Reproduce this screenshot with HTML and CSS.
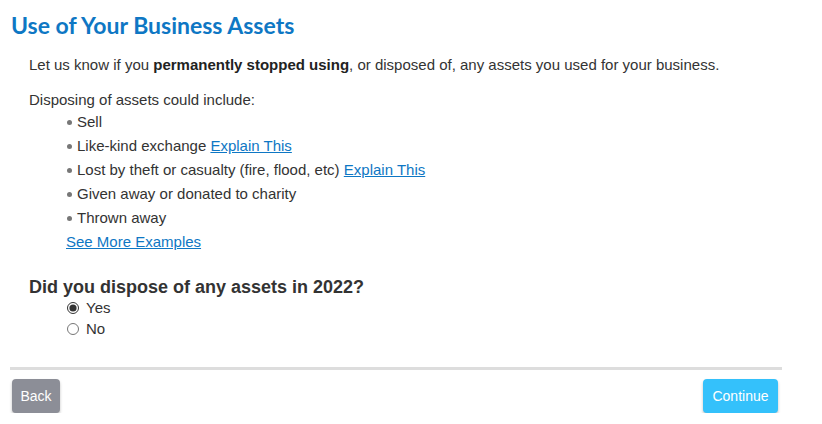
FILE: index.html
```html
<!DOCTYPE html>
<html lang="en">
<head>
    <meta charset="UTF-8">
    <meta name="viewport" content="width=device-width, initial-scale=1.0">
    <title>Use of Your Business Assets</title>
    <link rel="stylesheet" href="styles.css">
</head>
<body>
    <div class="page">
        <h1 class="title">Use of Your Business Assets</h1>

        <div class="content">
            <p class="intro">Let us know if you <strong>permanently stopped using</strong>, or disposed of, any assets you used for your business.</p>

            <p class="lead">Disposing of assets could include:</p>
            <ul class="examples">
                <li>Sell</li>
                <li>Like-kind exchange <a href="#">Explain This</a></li>
                <li>Lost by theft or casualty (fire, flood, etc) <a href="#">Explain This</a></li>
                <li>Given away or donated to charity</li>
                <li>Thrown away</li>
            </ul>
            <a href="#" class="more">See More Examples</a>

            <h2 class="question">Did you dispose of any assets in 2022?</h2>
            <div class="options">
                <label class="option"><input type="radio" name="dispose" checked> Yes</label>
                <label class="option"><input type="radio" name="dispose"> No</label>
            </div>
        </div>

        <div class="footer">
            <button class="btn back">Back</button>
            <button class="btn continue">Continue</button>
        </div>
    </div>
</body>
</html>
```

FILE: styles.css
```css
/* General Reset */
* {
    box-sizing: border-box;
    margin: 0;
    padding: 0;
}

body {
    background-color: #fff;
    font-family: Arial, "Liberation Sans", sans-serif;
    font-size: 15px;
    color: #333;
}

.page {
    width: 772px;
    margin-left: 10px;
    padding-top: 11px;
}

/* Heading */
.title {
    font-family: Lato, "Open Sans", sans-serif;
    font-weight: 700;
    font-size: 23px;
    line-height: 28px;
    color: #0e77c4;
    padding-left: 1px;
}

.content {
    padding-left: 19px;
}

.intro {
    margin-top: 17px;
    line-height: 18px;
}

.intro strong {
    color: #222;
}

.lead {
    margin-top: 17px;
    line-height: 18px;
}

/* Examples list */
.examples {
    list-style: none;
    margin-left: 38px;
    margin-top: 1px;
}

.examples li {
    line-height: 24px;
    position: relative;
    padding-left: 10px;
}

.examples li::before {
    content: "";
    position: absolute;
    left: 0;
    top: 10px;
    width: 5px;
    height: 5px;
    border-radius: 50%;
    background-color: #777;
}

a {
    color: #0e77c4;
}

.more {
    display: inline-block;
    margin-left: 37px;
    line-height: 24px;
}

/* Question */
.question {
    margin-top: 23px;
    font-size: 18px;
    line-height: 20px;
    color: #333;
}

.options {
    margin-left: 38px;
    margin-top: 0;
}

.option {
    display: flex;
    align-items: center;
    gap: 7px;
    line-height: 21px;
}

.option input {
    width: 12px;
    height: 12px;
    margin: 0;
    accent-color: #333;
}

/* Footer */
.footer {
    margin-top: 28px;
    border-top: 3px solid #ddd;
    padding: 9px 4px 0 2px;
    display: flex;
    justify-content: space-between;
}

.btn {
    height: 34px;
    border: none;
    border-radius: 4px;
    color: #fff;
    font-family: "Liberation Sans Narrow", Arial, sans-serif;
    font-size: 14px;
    box-shadow: 0 2px 3px rgba(0, 0, 0, 0.25);
    cursor: pointer;
}

.back {
    width: 48px;
    background-color: #8c8e97;
}

.continue {
    width: 75px;
    background-color: #34c1fb;
}
```
